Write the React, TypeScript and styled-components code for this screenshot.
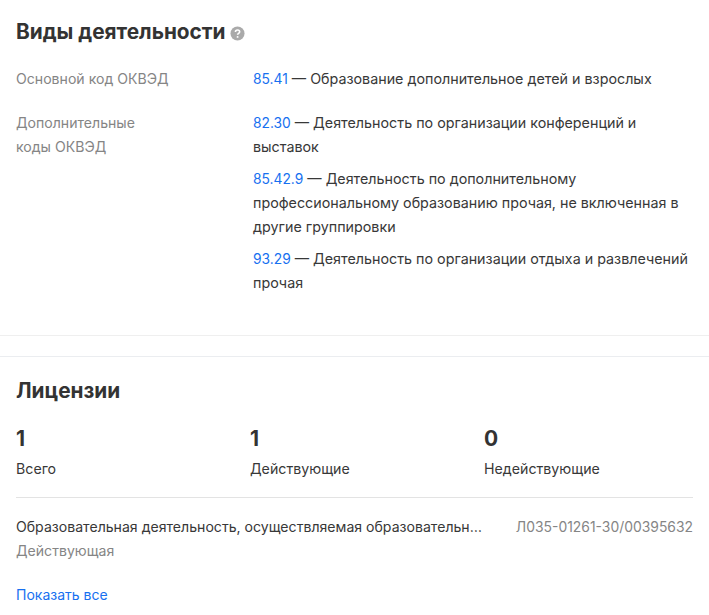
import React from 'react'
import styled, { createGlobalStyle } from 'styled-components'

const GlobalStyle = createGlobalStyle`
  html, body {
    margin: 0;
    padding: 0;
    background: #fff;
  }
  body {
    font-family: Inter, "Liberation Sans", Arial, sans-serif;
    font-size: 14.3px;
    line-height: 24px;
    color: #383838;
  }
`

const Page = styled.div`
  width: 709px;
  height: 615px;
  overflow: hidden;
`

const ActivitySection = styled.section`
  padding: 16px 16px 40px;
  border-bottom: 1px solid #efefef;
`

const LicenseSection = styled.section`
  margin-top: 20px;
  padding: 18px 16px 0;
  border-top: 1px solid #ebedf0;
`

const Title = styled.h2`
  display: flex;
  align-items: center;
  gap: 4px;
  margin: 0;
  height: 32px;
  font-size: 20.8px;
  line-height: 32px;
  font-weight: 700;
  color: #333;
`

const HelpIcon = styled.svg`
  width: 15px;
  height: 15px;
  margin-top: 2px;
`

const ActivityRow = styled.div<{ $top: number }>`
  display: grid;
  grid-template-columns: 237px 1fr;
  margin-top: ${p => p.$top}px;
`

const RowLabel = styled.div`
  color: #858585;
  font-size: 14.1px;
`

const Codes = styled.div`
  display: flex;
  flex-direction: column;
  gap: 8px;
`

const Code = styled.a`
  color: #1770f0;
  font-size: 13.8px;
`

const Stats = styled.div`
  display: grid;
  grid-template-columns: repeat(3, 234px);
  margin-top: 16px;
  padding-bottom: 16px;
  border-bottom: 1px solid #e3e3e3;
`

const StatValue = styled.div`
  font-size: 21px;
  line-height: 32px;
  font-weight: 700;
  color: #333;
`

const StatLabel = styled.div`
  margin-top: 2px;
  font-size: 14.2px;
`

const LicenseRow = styled.div`
  display: flex;
  justify-content: space-between;
  gap: 32px;
  margin-top: 17px;
`

const LicenseName = styled.div`
  flex: 1;
  min-width: 0;
  font-size: 14.1px;
  white-space: nowrap;
  overflow: hidden;
  text-overflow: ellipsis;
`

const LicenseNumber = styled.div`
  color: #858585;
  font-size: 13.9px;
`

const LicenseStatus = styled.div`
  color: #858585;
  font-size: 14.1px;
`

const ShowAll = styled.a`
  display: block;
  margin-top: 20px;
  color: #1770f0;
  font-size: 14px;
`

const App: React.FC = () => {
  return (
    <Page>
      <GlobalStyle />
      <ActivitySection>
        <Title>
          Виды деятельности
          <HelpIcon viewBox="0 0 16 16">
            <circle cx="8" cy="8" r="7.5" fill="#aaa" />
            <path d="M5.8 6.3c0-1.3 1-2.1 2.3-2.1s2.2.8 2.2 1.9c0 1.7-2.2 1.7-2.2 3.2" fill="none" stroke="#fff" strokeWidth="1.7" />
            <circle cx="8.1" cy="11.6" r="1.05" fill="#fff" />
          </HelpIcon>
        </Title>

        <ActivityRow $top={19}>
          <RowLabel>Основной код ОКВЭД</RowLabel>
          <Codes>
            <div><Code>85.41</Code> — Образование дополнительное детей и взрослых</div>
          </Codes>
        </ActivityRow>

        <ActivityRow $top={20}>
          <RowLabel>Дополнительные<br />коды ОКВЭД</RowLabel>
          <Codes>
            <div><Code>82.30</Code> — Деятельность по организации конференций и выставок</div>
            <div><Code>85.42.9</Code> — Деятельность по дополнительному профессиональному образованию прочая, не включенная в другие группировки</div>
            <div><Code>93.29</Code> — Деятельность по организации отдыха и развлечений прочая</div>
          </Codes>
        </ActivityRow>
      </ActivitySection>

      <LicenseSection>
        <Title>Лицензии</Title>
        <Stats>
          <div><StatValue>1</StatValue><StatLabel>Всего</StatLabel></div>
          <div><StatValue>1</StatValue><StatLabel>Действующие</StatLabel></div>
          <div><StatValue>0</StatValue><StatLabel>Недействующие</StatLabel></div>
        </Stats>
        <LicenseRow>
          <LicenseName>Образовательная деятельность, осуществляемая образовательными организациями</LicenseName>
          <LicenseNumber>Л035-01261-30/00395632</LicenseNumber>
        </LicenseRow>
        <LicenseStatus>Действующая</LicenseStatus>
        <ShowAll>Показать все</ShowAll>
      </LicenseSection>
    </Page>
  )
}

export default App
